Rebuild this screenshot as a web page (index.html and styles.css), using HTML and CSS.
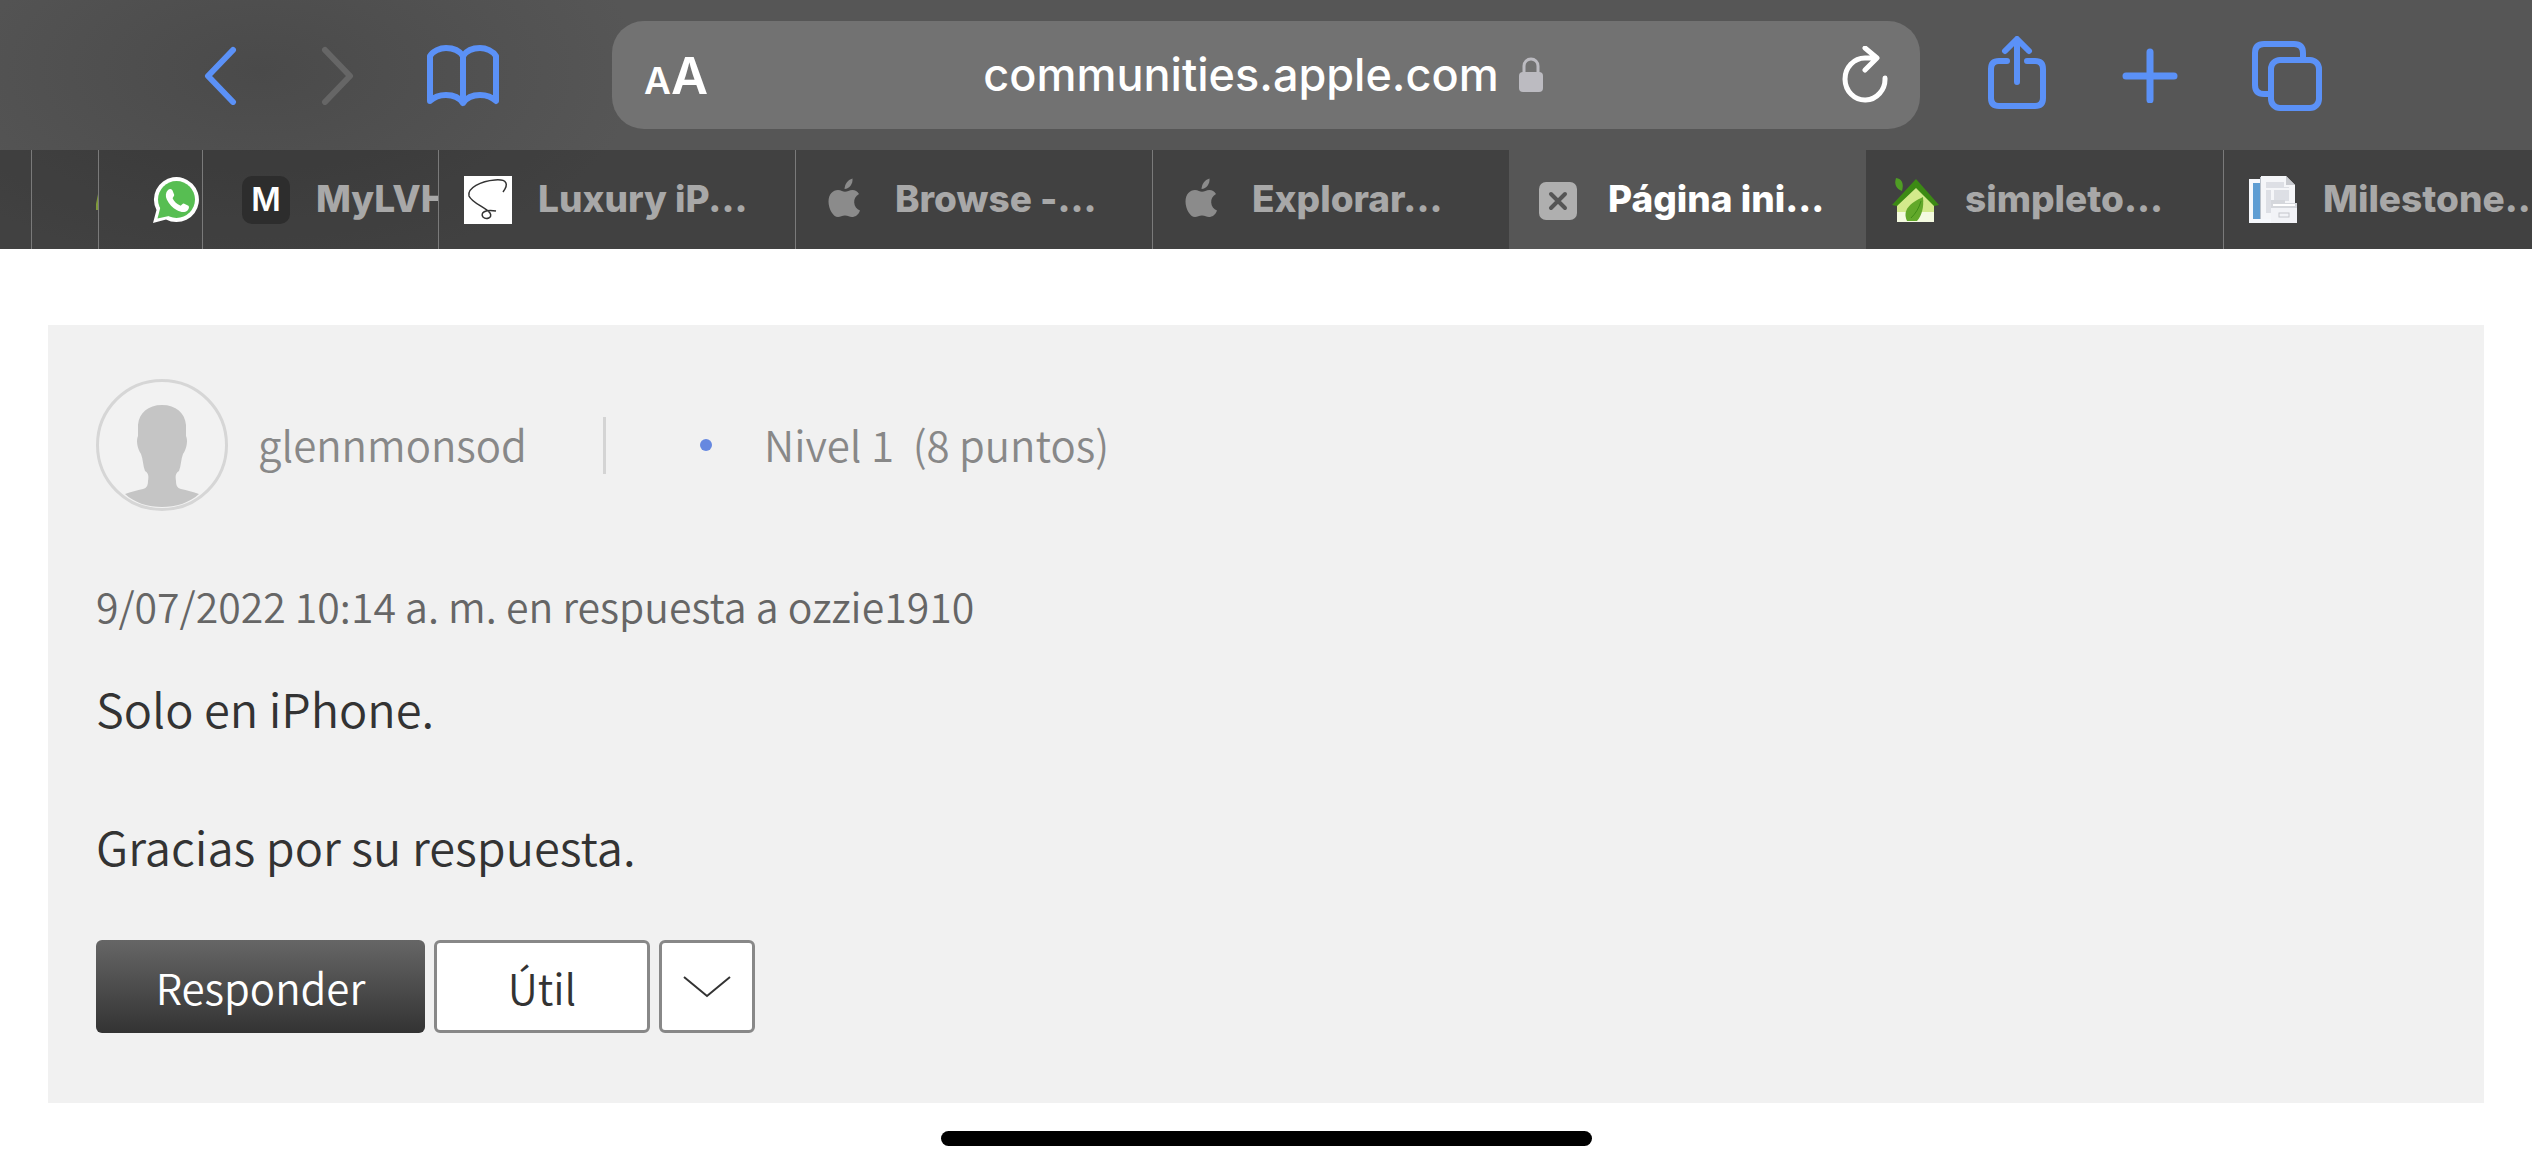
FILE: index.html
```html
<!DOCTYPE html>
<html lang="es">
<head>
<meta charset="utf-8">
<meta name="viewport" content="width=device-width, initial-scale=1">
<title>Página inicial</title>
<link rel="stylesheet" href="styles.css">
</head>
<body>
<header class="browser">
  <div class="toolbar">
    <div class="nav-group">
      <button class="icon-btn" aria-label="Atrás"><svg width="36" height="60" viewBox="0 0 36 60"><path d="M31 5 6 31l25 26"/></svg></button>
      <button class="icon-btn icon-btn-off" aria-label="Adelante" disabled><svg width="36" height="60" viewBox="0 0 36 60"><path d="M5 5l25 26L5 57"/></svg></button>
      <button class="icon-btn icon-btn-book" aria-label="Marcadores"><svg width="76" height="64" viewBox="0 0 76 64"><path d="M38 13C34 7 27 5 21 5S8 8 5 13V58C9 54 15 52 21 52s13 2 17 8c4-6 11-8 17-8s12 2 16 6V13C68 8 61 5 55 5S42 7 38 13zV60"/></svg></button>
    </div>
    <div class="address">
      <button class="text-size" aria-label="Tamaño del texto"><span class="small-a">A</span><span class="big-a">A</span></button>
      <a class="url" href="#">communities.apple.com
        <svg width="24" height="36" viewBox="0 0 24 36"><path d="M5 17V9a7 7 0 0 1 14 0v8" fill="none" stroke="#bcbbc1" stroke-width="3"/><rect y="15" width="24" height="20" rx="4" fill="#bcbbc1"/></svg></a>
      <button class="icon-btn reload" aria-label="Recargar"><svg width="50" height="58" viewBox="0 0 50 58"><path d="M45 32A20 21 0 1 1 25 12H36M25 2 37 12 25 24"/></svg></button>
    </div>
    <div class="action-group">
      <button class="icon-btn" aria-label="Compartir"><svg width="64" height="78" viewBox="0 0 64 78"><path d="M22 25H14Q6 25 6 33V62Q6 70 14 70H50Q58 70 58 62V33Q58 25 50 25H42M32 46V4M20 15 32 3 44 15"/></svg></button>
      <button class="icon-btn" aria-label="Pestaña nueva"><svg width="56" height="56" viewBox="0 0 56 56"><path d="M28 5V53M4 29H52" stroke-width="7"/></svg></button>
      <button class="icon-btn" aria-label="Pestañas"><svg width="72" height="72" viewBox="0 0 72 72"><path d="M18 55H13Q4 55 4 46V14Q4 5 13 5H43Q52 5 52 14V20"/><rect x="20" y="21" width="48" height="48" rx="9"/></svg></button>
    </div>
  </div>
  <nav class="tabs">
    <a class="tab tab-edge" href="#" aria-label="Pestaña"></a>
    <a class="tab tab-sliver" href="#" aria-label="Pestaña"><svg width="2" height="20" viewBox="0 0 2 20"><path d="M2 4V20H0V14z" fill="#7f9a3a"/></svg></a>
    <a class="tab tab-whatsapp" href="#" aria-label="WhatsApp"><svg width="48" height="48" viewBox="0 0 48 48"><path d="M1 47 4.500 34A22.500 22.500 0 1 1 14 43.500z" fill="#fff"/><circle cx="24.500" cy="23.500" r="18.500" fill="#57be52"/><path d="M5.500 42.500 8.500 31 17 40z" fill="#57be52"/><path d="M16 14c2-2 4-1 4.500.5l1.700 4.200c.4 1-1.900 3-1.500 3.900 1.500 3.200 4.300 5.600 7.500 7 1 .4 2.500-2.300 3.600-2l4.600 2.200c1.200.7.400 3.600-.9 4.700-3 2.500-6.500 1.700-10.500-.2C20.500 32 17 28 14.800 23.500c-1.500-3.200-1.300-7 1.200-9.500z" fill="#fff"/></svg></a>
    <a class="tab tab-mylvh" href="#"><span class="letter-icon">M</span><span class="title">MyLVH</span></a>
    <a class="tab" href="#"><svg width="48" height="48" viewBox="0 0 48 48"><rect width="48" height="48" fill="#fff"/><path d="M39 16c6-8 4-13-8-12C17 5 3 12 5 20c3 7 16 11 21 17 3 5-4 7-7 4-3-4 2-8 13-6" fill="none" stroke="#333" stroke-width="1.500"/></svg><span class="title">Luxury iP...</span></a>
    <a class="tab" href="#"><svg width="48" height="48" viewBox="0 0 48 48"><use href="#apple"/></svg><span class="title">Browse -...</span></a>
    <a class="tab" href="#"><svg width="48" height="48" viewBox="0 0 48 48"><g id="apple" fill="#8b8b8b"><path d="M23.500 13c.3-5 3-9 8-10.500C32 8 28.500 12.500 23.500 13z"/><path d="M38 18c-3.500 2-5 5-4.800 8.500.2 4 2.500 6.500 5.800 8C37.500 39 34 41 31 41c-2.500 0-4-1.500-7-1.500S19.500 41 17 41c-5 0-9.500-8-9.500-15.500C7.500 18 12 14 17 14c3 0 5 1.800 7 1.800S28.500 14 31.500 14c2.500 0 5 1.300 6.500 4z"/></g></svg><span class="title">Explorar...</span></a>
    <a class="tab tab-active" href="#" aria-current="page"><svg width="48" height="48" viewBox="0 0 48 48"><rect x="5" y="6" width="38" height="38" rx="7" fill="#afafaf"/><path d="M17 18 31 32M31 18 17 32" stroke="#555" stroke-width="4" stroke-linecap="round"/></svg><span class="title">Página ini...</span></a>
    <a class="tab tab-flush" href="#"><svg width="48" height="48" viewBox="0 0 48 48"><path d="M6 28 25 8 43 28V46H6z" fill="#d3ea8c"/><path d="M6 36H43V46H6z" fill="#f4fae0"/><path d="M1 29 25 3 48 29 43 30 25 12 6 30z" fill="#3c8a14"/><path d="M5 2c6 1 8 5 6 13C5 13 3 8 5 2z" fill="#4f9d24"/><path d="M32 21c1 10-1 18-6 24H16c-5-11 3-18 16-24z" fill="#62a82a"/><path d="M30 25c-2 7-5 12-10 17" stroke="#3f8d16" fill="none"/></svg><span class="title">simpleto...</span></a>
    <a class="tab" href="#"><svg width="48" height="48" viewBox="0 0 48 48"><path d="M0 3H30V47H0z" fill="#f6f8fc"/><path d="M4 7H14V43H4z" fill="#5e9dd3"/><path d="M12 0H37L46 9V43H12z" fill="#f5f6f9"/><path d="M11.500 1V43" stroke="#b9c0c9"/><path d="M37 0V9H46z" fill="#c9cbd0"/><path d="M17 6H35V11H40V12H17zM17 14H22V37H17zM25 14H40V25H25z" fill="#dddfe5"/><path d="M22 27H48V47H22z" fill="#f2f3f7"/><path d="M22 24H36V27H48V32H22z" fill="#d5d7dc"/><path d="M24 28H46V30H24z" fill="#fff"/><rect x="30" y="37" width="10" height="4" fill="none" stroke="#c4c6cc"/></svg><span class="title">Milestone...</span></a>
  </nav>
</header>
<main class="page">
  <article class="card">
    <div class="author">
      <svg class="avatar" width="132" height="132" viewBox="0 0 132 132"><circle cx="66" cy="66" r="64.500" fill="#f2f2f2" stroke="#d6d6d6" stroke-width="3"/><path d="M66 26c14 0 23 8 24 20v11c2 4 1 12-3 18-2 5-2 12-4 17-3 2-4 4-3 10 0 4 1 7 5 8 6 1 12 3 18 5-10 9-23 13-37 13s-27-4-37-13c6-2 12-4 18-5 4-1 5-4 5-8 1-6 0-8-3-10-2-5-2-12-4-17-4-6-5-14-3-18V46c1-12 10-20 24-20z" fill="#c5c5c5"/></svg>
      <a class="name" href="#">glennmonsod</a>
      <span class="divider"></span>
      <span class="dot"></span>
      <span class="level">Nivel 1&nbsp; (8 puntos)</span>
    </div>
    <p class="meta">9/07/2022 10:14 a. m. en respuesta a ozzie1910</p>
    <div class="message">
      <p>Solo en iPhone.</p>
      <p>Gracias por su respuesta.</p>
    </div>
    <div class="buttons">
      <button class="btn btn-primary">Responder</button>
      <button class="btn btn-useful">Útil</button>
      <button class="btn btn-more" aria-label="Más opciones"><svg width="48" height="22" viewBox="0 0 48 22"><path d="M1 1 24 20 47 1" fill="none" stroke="#333" stroke-width="2"/></svg></button>
    </div>
  </article>
</main>
<div class="home-indicator"></div>
</body>
</html>
```
FILE: styles.css
```css
* { box-sizing: border-box; }
body { margin: 0; background: #fff; color: #333; font-family: "Noto Sans CJK SC", "Open Sans", sans-serif; font-weight: 350; }
button { padding: 0; border: 0; background: none; font: inherit; color: inherit; }
a { color: inherit; text-decoration: none; }
p { margin: 0; }
svg { display: block; flex: none; }

.browser { font-family: Inter, "Liberation Sans", sans-serif; background: radial-gradient(ellipse 380px 200px at 260px 70px, #4a4a4a, #565656); }
.toolbar { display: flex; align-items: center; height: 150px; }
.nav-group, .action-group { display: flex; align-items: center; }
.nav-group { width: 612px; padding-left: 202px; gap: 82px; }
.action-group { width: 612px; padding-left: 65px; gap: 73px; }
.icon-btn svg { fill: none; stroke: #5b91f7; stroke-width: 6; stroke-linecap: round; stroke-linejoin: round; }
.icon-btn-off svg { stroke: #666; }
.icon-btn-book { margin-left: -13px; }
.address { flex: 1; display: flex; align-items: center; justify-content: space-between; height: 108px; padding: 0 30px 0 32px; border-radius: 32px; background: #727272; color: #fff; }
.text-size { display: flex; align-items: baseline; width: 64px; padding-top: 6px; font-weight: 600; line-height: 60px; }
.small-a { font-size: 37px; }
.big-a { font-size: 51px; }
.url { display: flex; align-items: center; gap: 20px; margin-right: 22px; font-size: 45px; font-weight: 500; line-height: 60px; }
.reload svg { stroke: #fff; stroke-width: 5; }

.tabs { display: flex; height: 99px; overflow: hidden; background: rgba(0, 0, 0, .24); }
.tab { flex: none; display: flex; align-items: center; gap: 26px; width: 357px; padding-left: 25px; border-left: 1px solid #7a7a7a; overflow: hidden; color: #a8a8a8; font-size: 37px; font-weight: 800; white-space: nowrap; }
.tab-edge { width: 31px; border: 0; }
.tab-sliver { width: 67px; padding-left: 64px; }
.tab-whatsapp { width: 104px; padding-left: 53px; }
.tab-mylvh { width: 236px; padding-left: 39px; }
.tab-active { border: 0; background: #565656; color: #fff; }
.tab-flush { border: 0; }
.title { padding-bottom: 2px; }
.letter-icon { flex: none; width: 48px; border-radius: 10px; background: #2d2d2d; color: #fff; font-size: 32px; font-weight: 600; line-height: 48px; text-align: center; }

.page { padding: 76px 48px 67px; }
.card { padding: 54px 48px 70px; background: #f1f1f1; font-size: 42px; line-height: 60px; }
.author { display: flex; align-items: center; color: #888; }
.name { width: 375px; padding-left: 30px; }
.name, .level { padding-bottom: 2px; }
.divider { width: 3px; height: 57px; margin-right: 94px; background: #d4d4d4; }
.dot { width: 12px; height: 12px; margin-right: 52px; border-radius: 50%; background: #6688e0; }
.meta { margin-top: 64px; color: #666; font-size: 41px; }
.message { display: grid; gap: 69px; margin-top: 38px; font-size: 47px; line-height: 69px; }
.buttons { display: flex; gap: 9px; margin-top: 60px; }
.btn { height: 93px; border: 3px solid #888; border-radius: 6px; background: #fff; color: #333; }
.btn-primary { width: 329px; border: 0; background: linear-gradient(#666, #333); color: #fff; }
.btn-useful { width: 216px; }
.btn-more { display: grid; place-items: center; width: 96px; }

.home-indicator { position: fixed; left: 50%; bottom: 24px; width: 651px; height: 15px; margin-left: -325px; border-radius: 8px; background: #000; }
```
